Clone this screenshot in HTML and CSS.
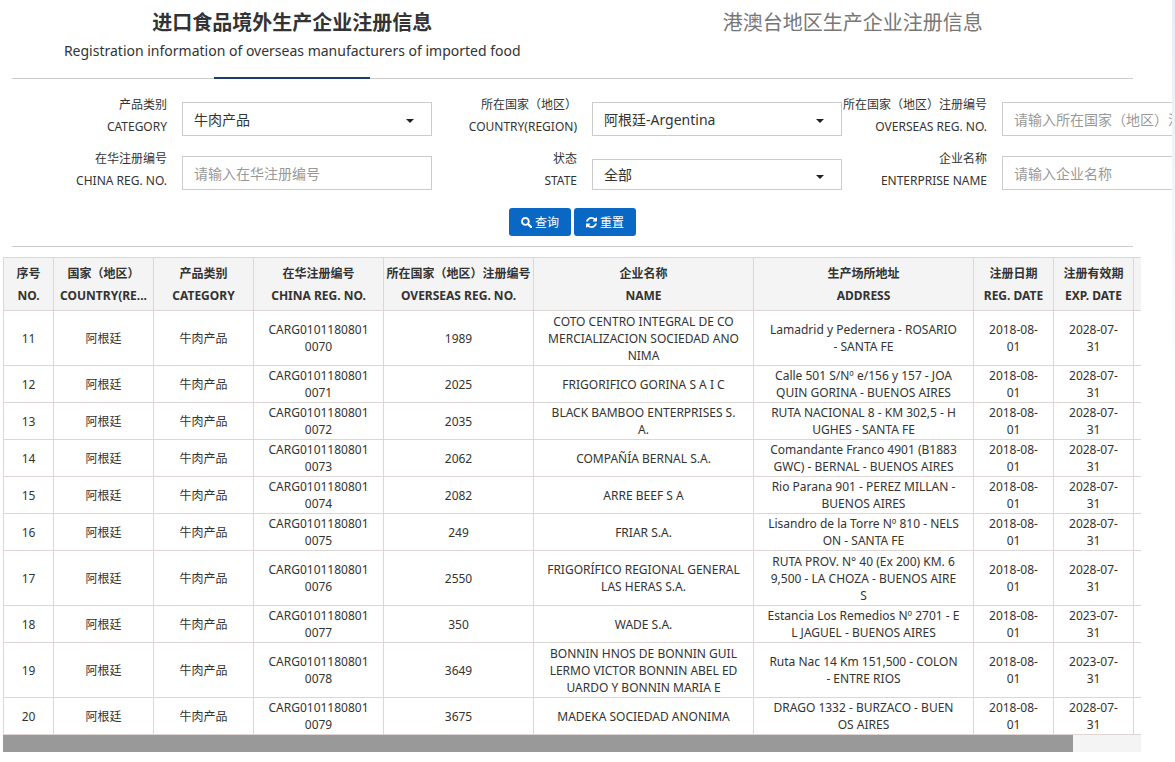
FILE: index.html
```html
<!DOCTYPE html>
<html lang="zh-CN">
<head>
    <meta charset="UTF-8">
    <meta name="viewport" content="width=device-width, initial-scale=1.0">
    <title>进口食品境外生产企业注册信息</title>
    <link rel="stylesheet" href="styles.css">
</head>
<body>
    <main class="page">
        <nav class="tabs">
            <a class="tab active" href="#overseas">
                <span class="tab-title">进口食品境外生产企业注册信息</span>
                <span class="tab-sub">Registration information of overseas manufacturers of imported food</span>
            </a>
            <a class="tab" href="#hmt">
                <span class="tab-title">港澳台地区生产企业注册信息</span>
            </a>
        </nav>

        <form class="search">
            <div class="fields">
                <label for="category">产品类别<br>CATEGORY</label>
                <div class="select"><select id="category"><option>牛肉产品</option></select></div>
                <label for="country">所在国家（地区）<br>COUNTRY(REGION)</label>
                <div class="select"><select id="country"><option>阿根廷-Argentina</option></select></div>
                <label for="overseasNo">所在国家（地区）注册编号<br>OVERSEAS REG. NO.</label>
                <input type="text" id="overseasNo" placeholder="请输入所在国家（地区）注册编号">

                <label for="chinaNo">在华注册编号<br>CHINA REG. NO.</label>
                <input type="text" id="chinaNo" placeholder="请输入在华注册编号">
                <label for="state">状态<br>STATE</label>
                <div class="select select-short"><select id="state"><option>全部</option></select></div>
                <label for="enterprise">企业名称<br>ENTERPRISE NAME</label>
                <input type="text" id="enterprise" placeholder="请输入企业名称">
            </div>
            <div class="actions">
                <button type="button" class="btn">
                    <svg class="icon" viewBox="0 0 12 12"><circle cx="4.8" cy="4.8" r="3.7" fill="none" stroke="#fff" stroke-width="2"/><path d="M7.6 7.6L11 11" stroke="#fff" stroke-width="2.4" stroke-linecap="round"/></svg>
                    查询
                </button>
                <button type="reset" class="btn">
                    <svg class="icon" viewBox="0 0 1536 1536"><path fill="#fff" d="M1511 928q0 5-1 7-64 268-268 434.500T764 1536q-146 0-282.500-55T238 1324l-129 129q-19 19-45 19t-45-19-19-45V960q0-26 19-45t45-19h448q26 0 45 19t19 45-19 45l-137 137q71 66 161 102t187 36q134 0 250-65t186-179q11-17 53-117 8-23 30-23h192q13 0 22.500 9.500t9.500 22.500zm25-800v448q0 26-19 45t-45 19h-448q-26 0-45-19t-19-45 19-45l138-138q-148-137-349-137-134 0-250 65T332 500q-11 17-53 117-8 23-30 23H50q-13 0-22.500-9.500T18 608v-7q65-268 270-434.500T768 0q146 0 284 55.500T1297 212l130-129q19-19 45-19t45 19 19 45z"/></svg>
                    重置
                </button>
            </div>
        </form>

        <div class="table-wrap">
            <table class="results">
                <colgroup>
                    <col class="c-no"><col class="c-sm"><col class="c-sm"><col class="c-china"><col class="c-reg">
                    <col class="c-lg"><col class="c-lg"><col class="c-date"><col class="c-date"><col class="c-state">
                </colgroup>
                <thead>
                    <tr>
                        <th>序号<br>NO.</th>
                        <th>国家（地区）<br>COUNTRY(RE...</th>
                        <th>产品类别<br>CATEGORY</th>
                        <th>在华注册编号<br>CHINA REG. NO.</th>
                        <th>所在国家（地区）注册编号<br>OVERSEAS REG. NO.</th>
                        <th>企业名称<br>NAME</th>
                        <th>生产场所地址<br>ADDRESS</th>
                        <th>注册日期<br>REG. DATE</th>
                        <th>注册有效期<br>EXP. DATE</th>
                        <th></th>
                    </tr>
                </thead>
                <tbody>
                    <tr class="tall">
                        <td>11</td><td>阿根廷</td><td>牛肉产品</td><td>CARG0101180801<br>0070</td><td>1989</td>
                        <td>COTO CENTRO INTEGRAL DE CO<br>MERCIALIZACION SOCIEDAD ANO<br>NIMA</td>
                        <td>Lamadrid y Pedernera - ROSARIO<br>- SANTA FE</td>
                        <td>2018-08-<br>01</td><td>2028-07-<br>31</td><td></td>
                    </tr>
                    <tr>
                        <td>12</td><td>阿根廷</td><td>牛肉产品</td><td>CARG0101180801<br>0071</td><td>2025</td>
                        <td>FRIGORIFICO GORINA S A I C</td>
                        <td>Calle 501 S/Nº e/156 y 157 - JOA<br>QUIN GORINA - BUENOS AIRES</td>
                        <td>2018-08-<br>01</td><td>2028-07-<br>31</td><td></td>
                    </tr>
                    <tr>
                        <td>13</td><td>阿根廷</td><td>牛肉产品</td><td>CARG0101180801<br>0072</td><td>2035</td>
                        <td>BLACK BAMBOO ENTERPRISES S.<br>A.</td>
                        <td>RUTA NACIONAL 8 - KM 302,5 - H<br>UGHES - SANTA FE</td>
                        <td>2018-08-<br>01</td><td>2028-07-<br>31</td><td></td>
                    </tr>
                    <tr>
                        <td>14</td><td>阿根廷</td><td>牛肉产品</td><td>CARG0101180801<br>0073</td><td>2062</td>
                        <td>COMPAÑÍA BERNAL S.A.</td>
                        <td>Comandante Franco 4901 (B1883<br>GWC) - BERNAL - BUENOS AIRES</td>
                        <td>2018-08-<br>01</td><td>2028-07-<br>31</td><td></td>
                    </tr>
                    <tr>
                        <td>15</td><td>阿根廷</td><td>牛肉产品</td><td>CARG0101180801<br>0074</td><td>2082</td>
                        <td>ARRE BEEF S A</td>
                        <td>Rio Parana 901 - PEREZ MILLAN -<br>BUENOS AIRES</td>
                        <td>2018-08-<br>01</td><td>2028-07-<br>31</td><td></td>
                    </tr>
                    <tr>
                        <td>16</td><td>阿根廷</td><td>牛肉产品</td><td>CARG0101180801<br>0075</td><td>249</td>
                        <td>FRIAR S.A.</td>
                        <td>Lisandro de la Torre Nº 810 - NELS<br>ON - SANTA FE</td>
                        <td>2018-08-<br>01</td><td>2028-07-<br>31</td><td></td>
                    </tr>
                    <tr class="tall">
                        <td>17</td><td>阿根廷</td><td>牛肉产品</td><td>CARG0101180801<br>0076</td><td>2550</td>
                        <td>FRIGORÍFICO REGIONAL GENERAL<br>LAS HERAS S.A.</td>
                        <td>RUTA PROV. N° 40 (Ex 200) KM. 6<br>9,500 - LA CHOZA - BUENOS AIRE<br>S</td>
                        <td>2018-08-<br>01</td><td>2028-07-<br>31</td><td></td>
                    </tr>
                    <tr>
                        <td>18</td><td>阿根廷</td><td>牛肉产品</td><td>CARG0101180801<br>0077</td><td>350</td>
                        <td>WADE S.A.</td>
                        <td>Estancia Los Remedios Nº 2701 - E<br>L JAGUEL - BUENOS AIRES</td>
                        <td>2018-08-<br>01</td><td>2023-07-<br>31</td><td></td>
                    </tr>
                    <tr class="tall">
                        <td>19</td><td>阿根廷</td><td>牛肉产品</td><td>CARG0101180801<br>0078</td><td>3649</td>
                        <td>BONNIN HNOS DE BONNIN GUIL<br>LERMO VICTOR BONNIN ABEL ED<br>UARDO Y BONNIN MARIA E</td>
                        <td>Ruta Nac 14 Km 151,500 - COLON<br>- ENTRE RIOS</td>
                        <td>2018-08-<br>01</td><td>2023-07-<br>31</td><td></td>
                    </tr>
                    <tr>
                        <td>20</td><td>阿根廷</td><td>牛肉产品</td><td>CARG0101180801<br>0079</td><td>3675</td>
                        <td>MADEKA SOCIEDAD ANONIMA</td>
                        <td>DRAGO 1332 - BURZACO - BUEN<br>OS AIRES</td>
                        <td>2018-08-<br>01</td><td>2028-07-<br>31</td><td></td>
                    </tr>
                </tbody>
            </table>
            <div class="scrollbar"><div class="scrollbar-thumb"></div></div>
        </div>
    </main>
</body>
</html>
```
FILE: styles.css
```css
* {
    box-sizing: border-box;
}

body {
    margin: 0;
    background: linear-gradient(#e6edf6, #fff 410px) no-repeat;
    color: #333;
    font-family: "Noto Sans", "Noto Sans CJK SC", sans-serif;
    font-size: 12px;
}

.page {
    min-height: 100vh;
    margin-right: 3px;
    background-color: #fff;
    overflow: hidden;
}

/* Tabs */
.tabs {
    display: grid;
    grid-template-columns: 1fr 1fr;
    height: 79px;
    margin: 0 39px 0 12px;
    border-bottom: 1px solid #ccc;
}

.tab {
    display: flex;
    flex-direction: column;
    align-items: center;
    height: 79px;
    padding-top: 8px;
    color: #777;
    text-decoration: none;
}

.tab-title {
    font-family: "Noto Sans CJK SC", sans-serif;
    font-size: 20px;
    line-height: 28px;
}

.tab-sub {
    font-size: 14px;
    line-height: 30px;
}

.tab.active {
    color: #333;
}

.tab.active .tab-title {
    font-weight: bold;
}

.tab.active::after {
    content: "";
    width: 156px;
    height: 2px;
    margin-top: auto;
    background-color: #1d3f66;
}

/* Search form */
.search {
    margin: 0 39px 0 12px;
    padding: 15px 0 10px;
    border-bottom: 1px solid #ccc;
}

.fields {
    display: grid;
    grid-template-columns: 170px 250px 160px 250px 160px 250px;
    row-gap: 10px;
    align-items: end;
}

.fields label {
    padding-right: 15px;
    line-height: 22px;
    text-align: right;
    white-space: nowrap;
}

.fields input,
.fields select {
    width: 100%;
    height: 34px;
    padding: 0 11px;
    border: 1px solid #ccc;
    border-radius: 0;
    background-color: #fff;
    color: #333;
    font-family: inherit;
    font-size: 14px;
    appearance: none;
}

.fields input {
    margin-bottom: 2px;
}

.fields input::placeholder {
    color: #999;
}

.select {
    position: relative;
    margin-bottom: 2px;
}

.select select {
    display: block;
}

.select-short select {
    height: 31px;
}

.select::after {
    content: "";
    position: absolute;
    top: 50%;
    right: 18px;
    border: 4px solid transparent;
    border-top-color: #222;
    border-bottom: 0;
    pointer-events: none;
}

.actions {
    display: flex;
    justify-content: center;
    gap: 3px;
    margin-top: 16px;
}

.btn {
    display: flex;
    align-items: center;
    gap: 3px;
    height: 28px;
    padding: 0 12px;
    border: 0;
    border-radius: 3px;
    background-color: #0968c3;
    color: #fff;
    font-family: inherit;
    font-size: 12px;
    cursor: pointer;
}

.icon {
    width: 11px;
    height: 11px;
}

/* Results */
.table-wrap {
    margin: 10px 31px 0 3px;
    overflow: hidden;
}

.results {
    width: 1210px;
    table-layout: fixed;
    border-collapse: collapse;
    text-align: center;
}

.c-no { width: 50px; }
.c-sm { width: 100px; }
.c-china { width: 130px; }
.c-reg { width: 150px; }
.c-lg { width: 220px; }
.c-date { width: 80px; }
.c-state { width: 80px; }

.results th,
.results td {
    padding: 0;
    border: 1px solid #e0d5d5;
    white-space: nowrap;
}

.results th {
    height: 53px;
    padding-top: 2px;
    background-color: #f4f4f4;
    line-height: 22px;
}

.results td {
    height: 37px;
    line-height: 17px;
}

.results .tall td {
    height: 55px;
}

.scrollbar {
    height: 17px;
    background-color: #f4f4f4;
}

.scrollbar-thumb {
    width: 94%;
    height: 100%;
    background-color: #999;
}
```
